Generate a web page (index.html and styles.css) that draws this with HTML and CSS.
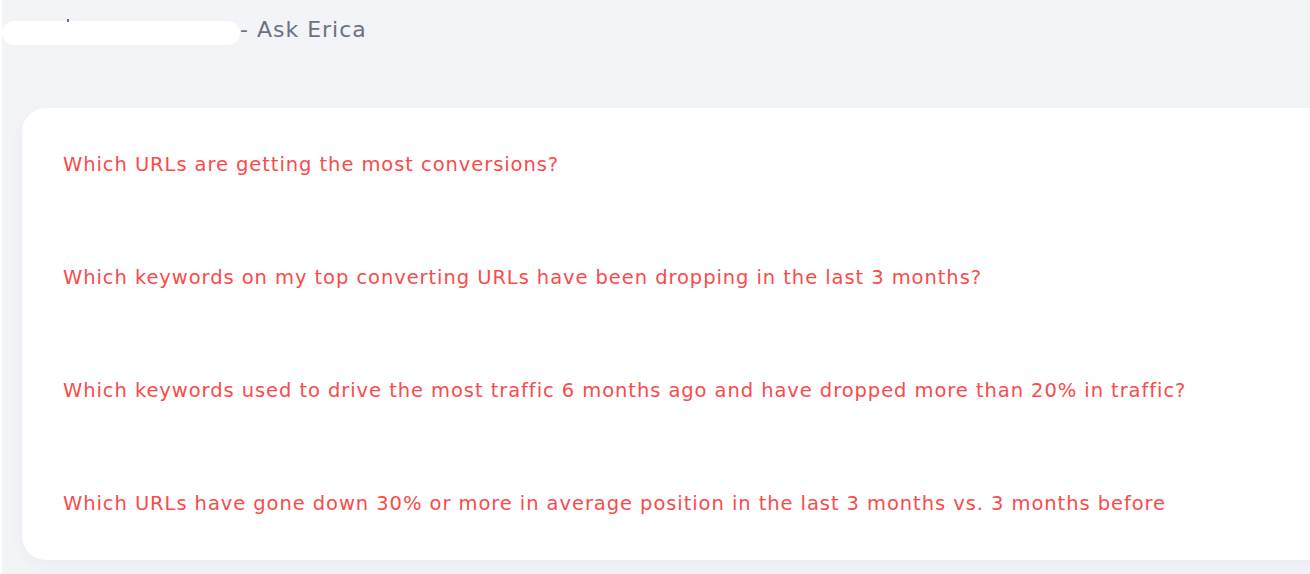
FILE: index.html
```html
<!DOCTYPE html>
<html lang="en">
<head>
<meta charset="utf-8">
<title>Ask Erica</title>
<link rel="stylesheet" href="styles.css">
</head>
<body>
<div class="app">
  <header class="header">
    <span class="redact"></span>
    <span class="title">- Ask Erica</span>
  </header>
  <main class="card">
    <div class="question">Which URLs are getting the most conversions?</div>
    <div class="question">Which keywords on my top converting URLs have been dropping in the last 3 months?</div>
    <div class="question">Which keywords used to drive the most traffic 6 months ago and have dropped more than 20% in traffic?</div>
    <div class="question">Which URLs have gone down 30% or more in average position in the last 3 months vs. 3 months before</div>
  </main>
</div>
</body>
</html>
```
FILE: styles.css
```css
html, body {
  margin: 0;
  padding: 0;
  background: #ffffff;
  height: 100%;
  overflow: hidden;
}
.app {
  margin-left: 2px;
  height: 574px;
  background: #f3f4f8;
  font-family: "DejaVu Sans", "Open Sans", sans-serif;
  padding-top: 14px;
  box-sizing: border-box;
}
.header {
  position: relative;
  display: flex;
  align-items: center;
  height: 31px;
}
.header::before {
  content: "";
  position: absolute;
  left: 65px;
  top: 5px;
  width: 2px;
  height: 3px;
  background: #6b7280;
}
.redact {
  align-self: flex-start;
  margin-top: 7px;
  width: 238px;
  height: 24px;
  background: #ffffff;
  border-radius: 12px;
}
.title {
  font-size: 22px;
  color: #6b7280;
  margin-top: -1px;
  letter-spacing: 1px;
}
.card {
  margin-top: 63px;
  margin-left: 20px;
  margin-right: -40px;
  height: 452px;
  background: #ffffff;
  border-radius: 24px;
  box-shadow: 0 6px 18px rgba(30, 40, 80, 0.04);
  display: flex;
  flex-direction: column;
}
.question {
  height: 113px;
  display: flex;
  align-items: center;
  padding-left: 41px;
  padding-bottom: 0;
  box-sizing: border-box;
  font-size: 19.5px;
  letter-spacing: 0.93px;
  color: #f94b4b;
  white-space: nowrap;
}
```
